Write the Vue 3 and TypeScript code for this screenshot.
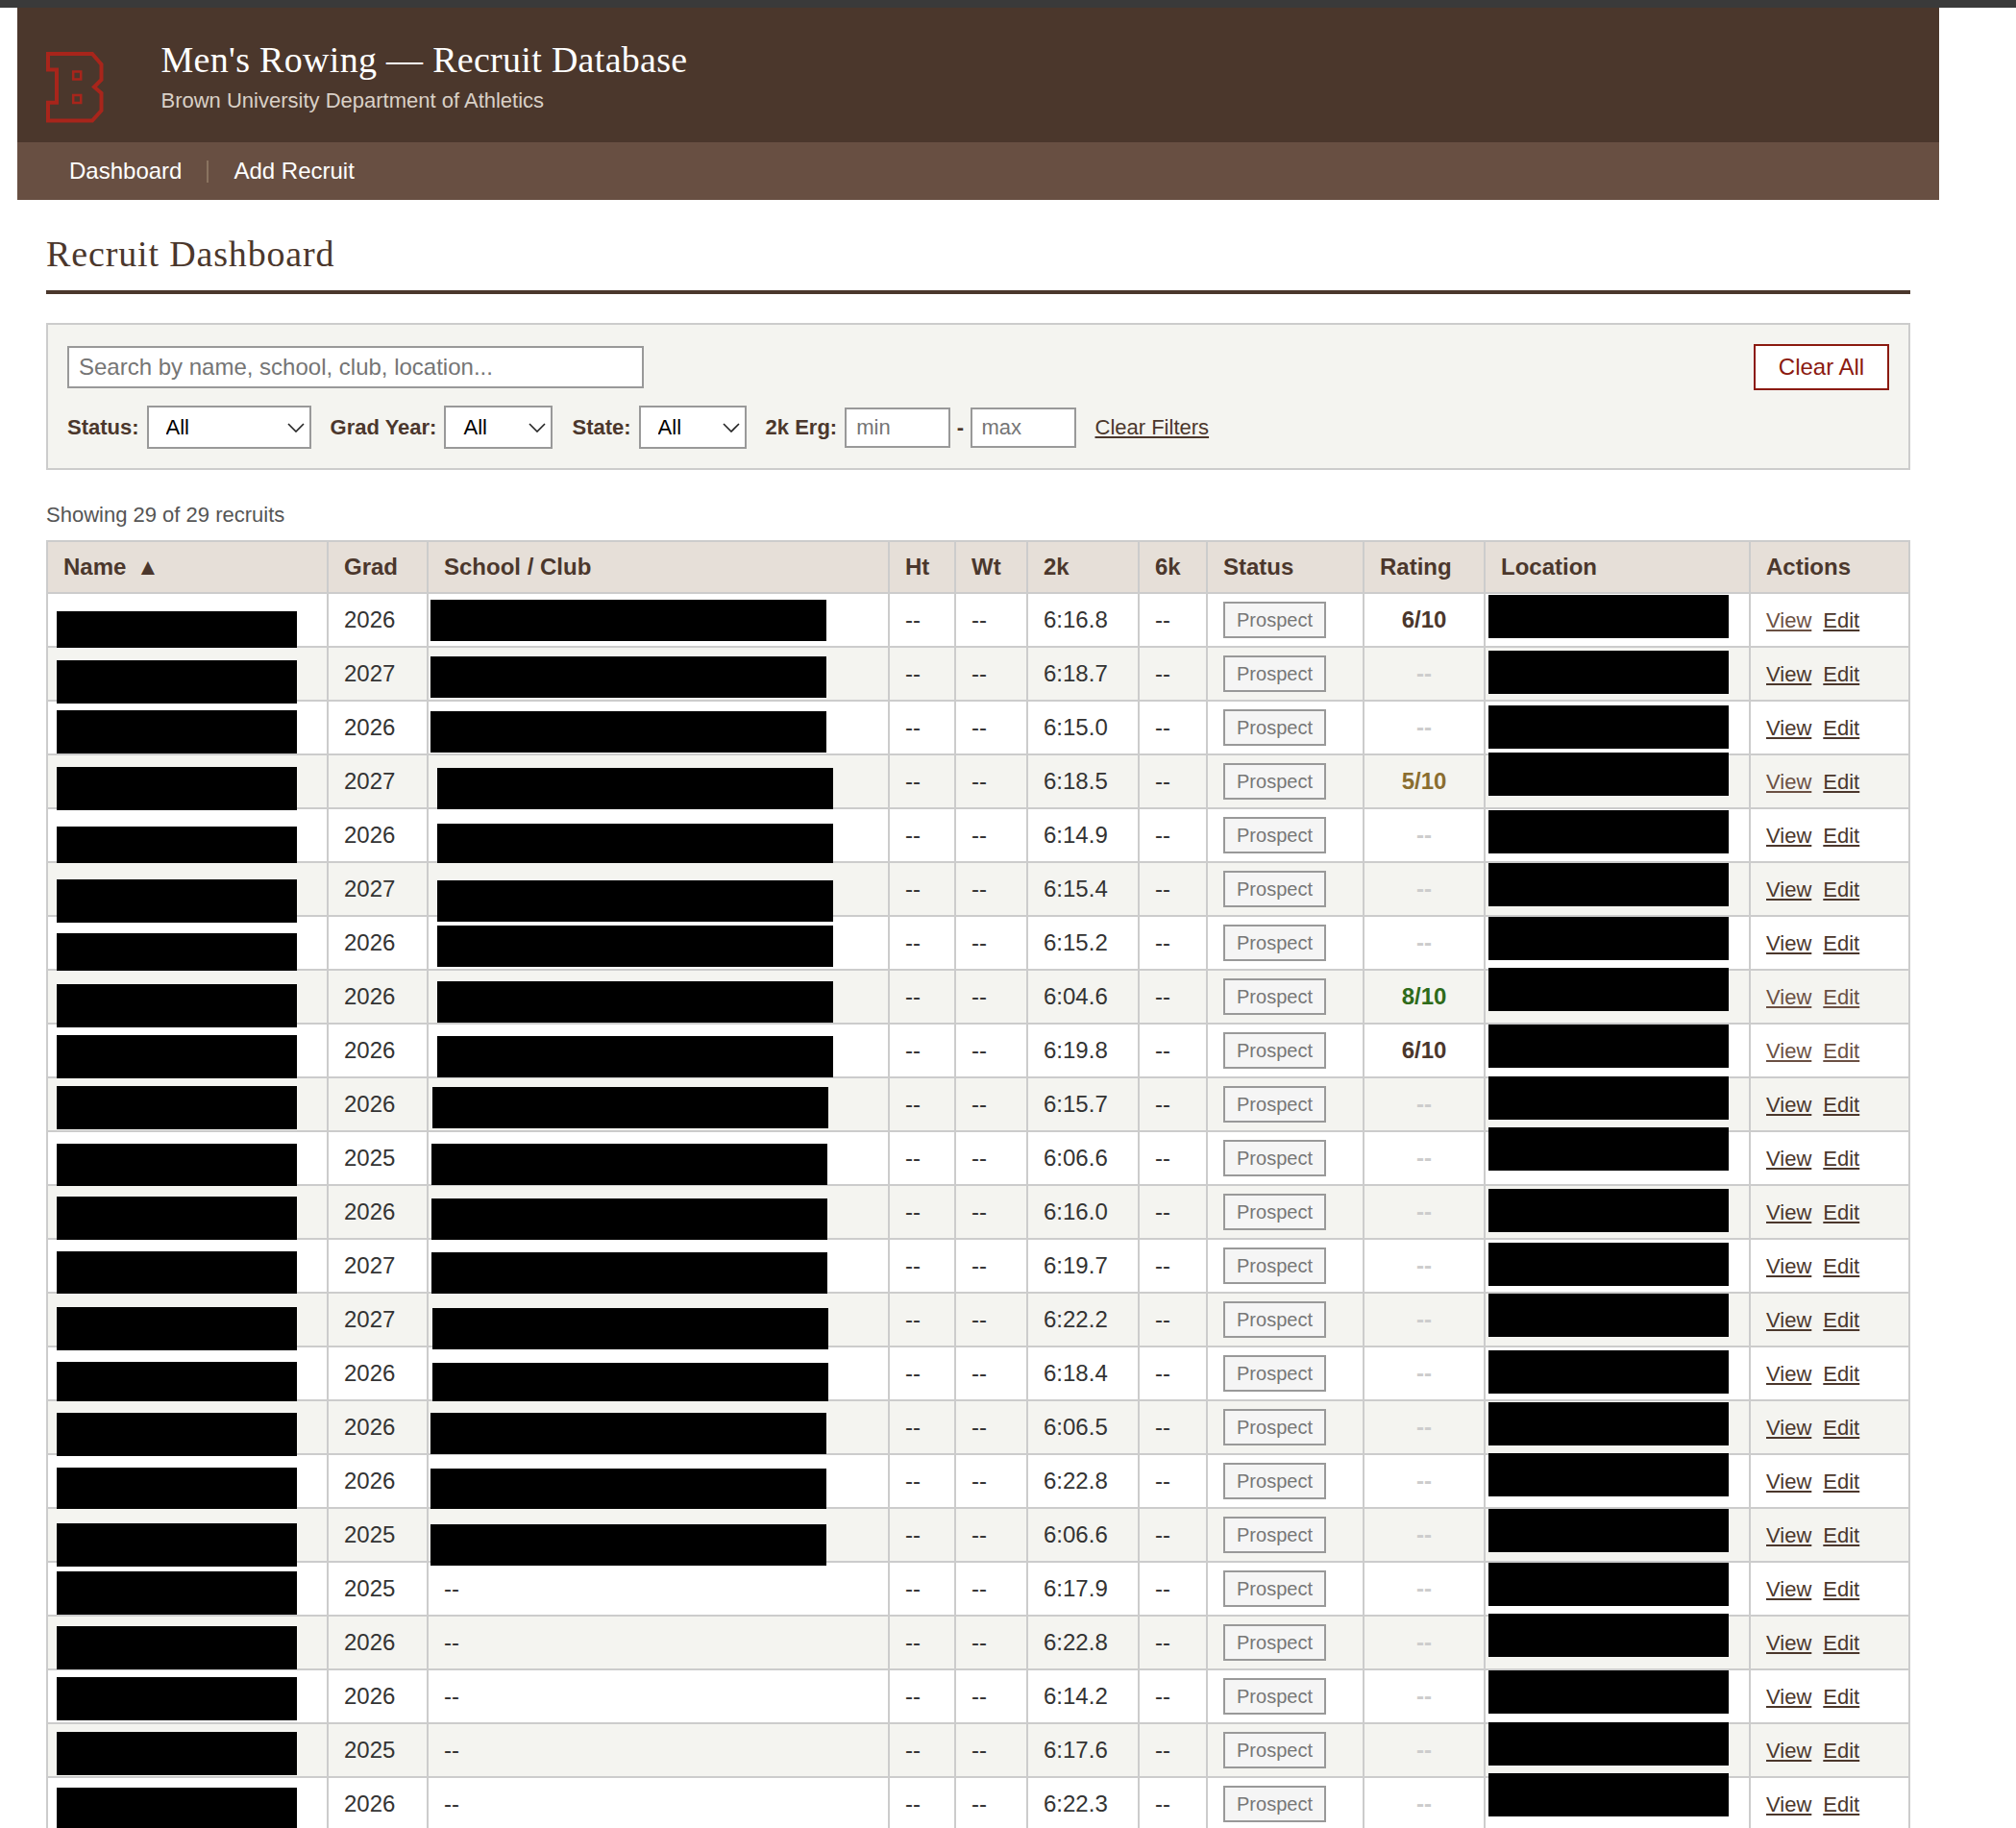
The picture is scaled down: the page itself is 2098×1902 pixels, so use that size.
<template>
  <div class="top-strip"></div>
  <div class="page">
    <header class="site-header">
      <svg class="logo" viewBox="0 0 60 74" width="60" height="74" aria-label="Brown B">
        <path class="logo-line" d="M2 2H48L57.5 13V29L50 36.5L57.5 43V61L48 71.5H2V52.7H11V18.5H2Z" />
        <rect class="logo-hole" x="28.2" y="20.5" width="8" height="8" />
        <rect class="logo-hole" x="28.2" y="45" width="8" height="8" />
      </svg>
      <div class="brand">
        <h1>Men's Rowing — Recruit Database</h1>
        <p>Brown University Department of Athletics</p>
      </div>
    </header>
    <nav class="site-nav">
      <a>Dashboard</a>
      <span class="nav-sep"></span>
      <a>Add Recruit</a>
    </nav>

    <main class="content">
      <h2>Recruit Dashboard</h2>

      <section class="filters">
        <div class="filters-top">
          <input class="search" type="text" placeholder="Search by name, school, club, location..." />
          <button class="clear-all">Clear All</button>
        </div>
        <div class="filters-row">
          <div v-for="f in selects" :key="f.label" class="filter">
            <label>{{ f.label }}:</label>
            <span class="select-box" :class="f.cls">
              <select><option>All</option></select>
              <svg class="chev" viewBox="0 0 18 10" width="18" height="10"><path d="M1 1L9 9L17 1" /></svg>
            </span>
          </div>
          <div class="filter erg">
            <label>2k Erg:</label>
            <input class="erg-input" type="text" placeholder="min" />
            <b class="dash">-</b>
            <input class="erg-input" type="text" placeholder="max" />
          </div>
          <a class="clear-filters">Clear Filters</a>
        </div>
      </section>

      <p class="showing">Showing 29 of 29 recruits</p>

      <table class="recruits">
        <colgroup>
          <col v-for="w in colWidths" :key="w.id" :style="{ width: w.px + 'px' }" />
        </colgroup>
        <thead>
          <tr>
            <th>Name <span class="sort">▲</span></th>
            <th>Grad</th>
            <th>School / Club</th>
            <th>Ht</th>
            <th>Wt</th>
            <th>2k</th>
            <th>6k</th>
            <th>Status</th>
            <th>Rating</th>
            <th>Location</th>
            <th>Actions</th>
          </tr>
        </thead>
        <tbody>
          <tr v-for="(r, i) in rows" :key="i">
            <td><span class="redact name-box" :style="{ top: boxTop(r.nameY, i) }"></span></td>
            <td>{{ r.grad }}</td>
            <td>
              <span v-if="r.schoolY" class="redact school-box" :style="{ top: boxTop(r.schoolY, i), left: r.schoolX - 446 + 'px' }"></span>
              <template v-else>--</template>
            </td>
            <td>--</td>
            <td>--</td>
            <td>{{ r.erg }}</td>
            <td>--</td>
            <td><span class="badge">Prospect</span></td>
            <td class="rating" :class="r.ratingCls">{{ r.rating || '--' }}</td>
            <td><span class="redact loc-box" :style="{ top: boxTop(r.locY, i) }"></span></td>
            <td class="actions">
              <a :class="{ seen: r.seenView }">View</a>
              <a :class="{ seen: r.seenEdit }">Edit</a>
            </td>
          </tr>
        </tbody>
      </table>
    </main>
  </div>
</template>

<script setup lang="ts">
interface Recruit {
  grad: string;
  erg: string;
  nameY: number;
  schoolY?: number;
  schoolX: number;
  locY: number;
  rating?: string;
  ratingCls?: string;
  seenView?: boolean;
  seenEdit?: boolean;
}

const selects = [
  { label: 'Status', cls: 'w-status' },
  { label: 'Grad Year', cls: 'w-grad' },
  { label: 'State', cls: 'w-state' }
];

const colWidths = [292, 104, 480, 69, 75, 116, 71, 163, 126, 276, 166].map((px, id) => ({ id, px }));

// 行顶部位置 (page y of the first body row, rows are 56px)
const firstRowY = 617;
const rowHeight = 56;

const boxTop = (y: number, i: number) => y - (firstRowY + rowHeight * i) - 1 + 'px';

const raw: [string, string, number, number, number, number][] = [
  ['2026', '6:16.8', 636, 624, 448, 619],
  ['2027', '6:18.7', 687, 683, 448, 677],
  ['2026', '6:15.0', 739, 740, 448, 734],
  ['2027', '6:18.5', 798, 799, 455, 783],
  ['2026', '6:14.9', 860, 857, 455, 843],
  ['2027', '6:15.4', 915, 916, 455, 898],
  ['2026', '6:15.2', 971, 963, 455, 954],
  ['2026', '6:04.6', 1024, 1021, 455, 1007],
  ['2026', '6:19.8', 1077, 1078, 455, 1066],
  ['2026', '6:15.7', 1130, 1131, 450, 1120],
  ['2025', '6:06.6', 1190, 1190, 449, 1173],
  ['2026', '6:16.0', 1245, 1247, 449, 1237],
  ['2027', '6:19.7', 1302, 1303, 449, 1293],
  ['2027', '6:22.2', 1360, 1361, 450, 1346],
  ['2026', '6:18.4', 1417, 1418, 450, 1405],
  ['2026', '6:06.5', 1470, 1470, 448, 1459],
  ['2026', '6:22.8', 1527, 1528, 448, 1512],
  ['2025', '6:06.6', 1585, 1586, 448, 1570],
  ['2025', '6:17.9', 1635, 0, 448, 1626],
  ['2026', '6:22.8', 1692, 0, 448, 1679],
  ['2026', '6:14.2', 1745, 0, 448, 1738],
  ['2025', '6:17.6', 1802, 0, 448, 1792],
  ['2026', '6:22.3', 1860, 0, 448, 1845]
];

const ratings: Record<number, [string, string]> = {
  0: ['6/10', 'r-mid'],
  3: ['5/10', 'r-low'],
  7: ['8/10', 'r-high'],
  8: ['6/10', 'r-mid']
};

const rows: Recruit[] = raw.map(([grad, erg, nameY, schoolY, schoolX, locY], i) => ({
  grad,
  erg,
  nameY,
  schoolY: schoolY || undefined,
  schoolX,
  locY,
  rating: ratings[i]?.[0],
  ratingCls: ratings[i]?.[1],
  seenView: i === 0 || i === 3 || i === 7 || i === 8,
  seenEdit: i === 7 || i === 8
}));
</script>

<style>
html,
body {
  margin: 0;
  background: #fff;
}
</style>

<style scoped>
.top-strip {
  height: 8px;
  background: #3a3a3a;
}

.page {
  width: 2000px;
  height: 1894px;
  margin-left: 18px;
  overflow: hidden;
  font-family: "Liberation Sans", Arial, sans-serif;
  color: #333;
}

.site-header {
  display: flex;
  align-items: flex-start;
  height: 140px;
  box-sizing: border-box;
  padding: 46px 0 0 30px;
  background: #4b372c;
}

.logo {
  flex-shrink: 0;
  margin-right: 59.5px;
}

.logo-line,
.logo-hole {
  fill: none;
  stroke: #a8251b;
}

.logo-line {
  stroke-width: 4;
}

.logo-hole {
  stroke-width: 2.5;
}

.brand {
  margin-top: -14px;
}

.brand h1 {
  margin: 0;
  font-family: "Liberation Serif", Georgia, serif;
  font-size: 38px;
  font-weight: 400;
  line-height: 44px;
  letter-spacing: 0.3px;
  color: #fff;
}

.brand p {
  margin: 8px 0 0;
  font-size: 22px;
  line-height: 26px;
  color: #d9d0c7;
}

.site-nav {
  display: flex;
  align-items: center;
  height: 60px;
  padding-left: 54px;
  background: #684f42;
  font-size: 24px;
  color: #fff;
}

.nav-sep {
  width: 2px;
  height: 23px;
  margin: 0 26px;
  background: #8a7360;
}

.content {
  padding: 0 30px;
}

.content h2 {
  height: 98px;
  box-sizing: border-box;
  margin: 0 0 30px;
  padding-top: 34px;
  border-bottom: 4px solid #4b372c;
  font-family: "Liberation Serif", Georgia, serif;
  font-size: 38px;
  font-weight: 400;
  line-height: 44px;
  letter-spacing: 0.85px;
  color: #4b372c;
}

.filters {
  box-sizing: border-box;
  height: 153px;
  padding: 20px;
  border: 2px solid #ccc;
  background: #f4f4f0;
}

.filters-top {
  display: flex;
  justify-content: space-between;
  align-items: center;
  height: 48px;
  margin-bottom: 16px;
}

.search {
  box-sizing: border-box;
  width: 600px;
  height: 44px;
  padding: 0 10px;
  border: 2px solid #999;
  background: #fff;
  font-family: inherit;
  font-size: 24px;
}

.clear-all {
  box-sizing: border-box;
  width: 141px;
  height: 48px;
  border: 2px solid #8b1a10;
  background: #fff;
  color: #8b1a10;
  font-family: inherit;
  font-size: 24px;
}

.filters-row {
  display: flex;
  align-items: center;
  gap: 20px;
  height: 45px;
  font-size: 22px;
  color: #4b372c;
}

.filter {
  display: flex;
  align-items: center;
  gap: 8px;
}

.filter label {
  font-weight: 700;
}

.select-box {
  position: relative;
  display: block;
  height: 45px;
}

.w-status {
  width: 171px;
}

.w-grad {
  width: 113px;
}

.w-state {
  width: 112px;
}

.select-box select {
  box-sizing: border-box;
  width: 100%;
  height: 100%;
  padding: 0 0 0 18px;
  border: 2px solid #999;
  border-radius: 0;
  appearance: none;
  background: #fff;
  color: #000;
  font-family: inherit;
  font-size: 22px;
}

.chev {
  position: absolute;
  top: 18px;
  right: 7px;
  pointer-events: none;
}

.chev path {
  fill: none;
  stroke: #222;
  stroke-width: 1.6;
}

.erg {
  gap: 6.5px;
}

.erg label {
  margin-right: 1.5px;
}

.erg-input {
  box-sizing: border-box;
  width: 110px;
  height: 42px;
  padding: 0 10px;
  border: 2px solid #999;
  background: #fff;
  font-family: inherit;
  font-size: 22px;
}

.clear-filters {
  color: #4b372c;
  text-decoration: underline;
}

.showing {
  margin: 34px 0 14px;
  font-size: 22px;
  line-height: 25px;
  color: #555;
}

.recruits {
  width: 1938px;
  border-collapse: collapse;
  table-layout: fixed;
  font-size: 24px;
}

.recruits th,
.recruits td {
  position: relative;
  box-sizing: border-box;
  padding: 0 16px;
  border: 2px solid #ccc;
  text-align: left;
  white-space: nowrap;
}

.recruits th {
  height: 54px;
  background: #e6dfd8;
  color: #4b372c;
  font-weight: 700;
}

.recruits td {
  height: 56px;
}

.recruits tbody tr:nth-child(even) td {
  background: #f4f4f0;
}

.sort {
  margin-left: 4px;
  font-size: 24px;
}

.redact {
  position: absolute;
  display: block;
  height: 45px;
  background: #000;
}

.name-box {
  left: 9px;
  width: 250px;
}

.school-box {
  width: 412px;
  height: 43px;
}

.loc-box {
  left: 3px;
  width: 250px;
}

.badge {
  display: inline-block;
  box-sizing: border-box;
  width: 107px;
  height: 38px;
  border: 2px solid #999;
  background: #f5f5f5;
  color: #777;
  font-size: 20px;
  line-height: 34px;
  text-align: center;
  vertical-align: middle;
}

.rating {
  color: #ccc;
  font-weight: 700;
}

.recruits td.rating {
  text-align: center;
}

.recruits td.r-mid {
  color: #4b372c;
}

.recruits td.r-low {
  color: #8a6d2f;
}

.recruits td.r-high {
  color: #2e6b1a;
}

.recruits td.actions {
  padding-top: 2px;
  padding-bottom: 0;
  font-size: 22px;
}

.actions a {
  margin-right: 12px;
  color: #4b372c;
  text-decoration: underline;
}

.actions a.seen {
  color: #6b5043;
}
</style>
